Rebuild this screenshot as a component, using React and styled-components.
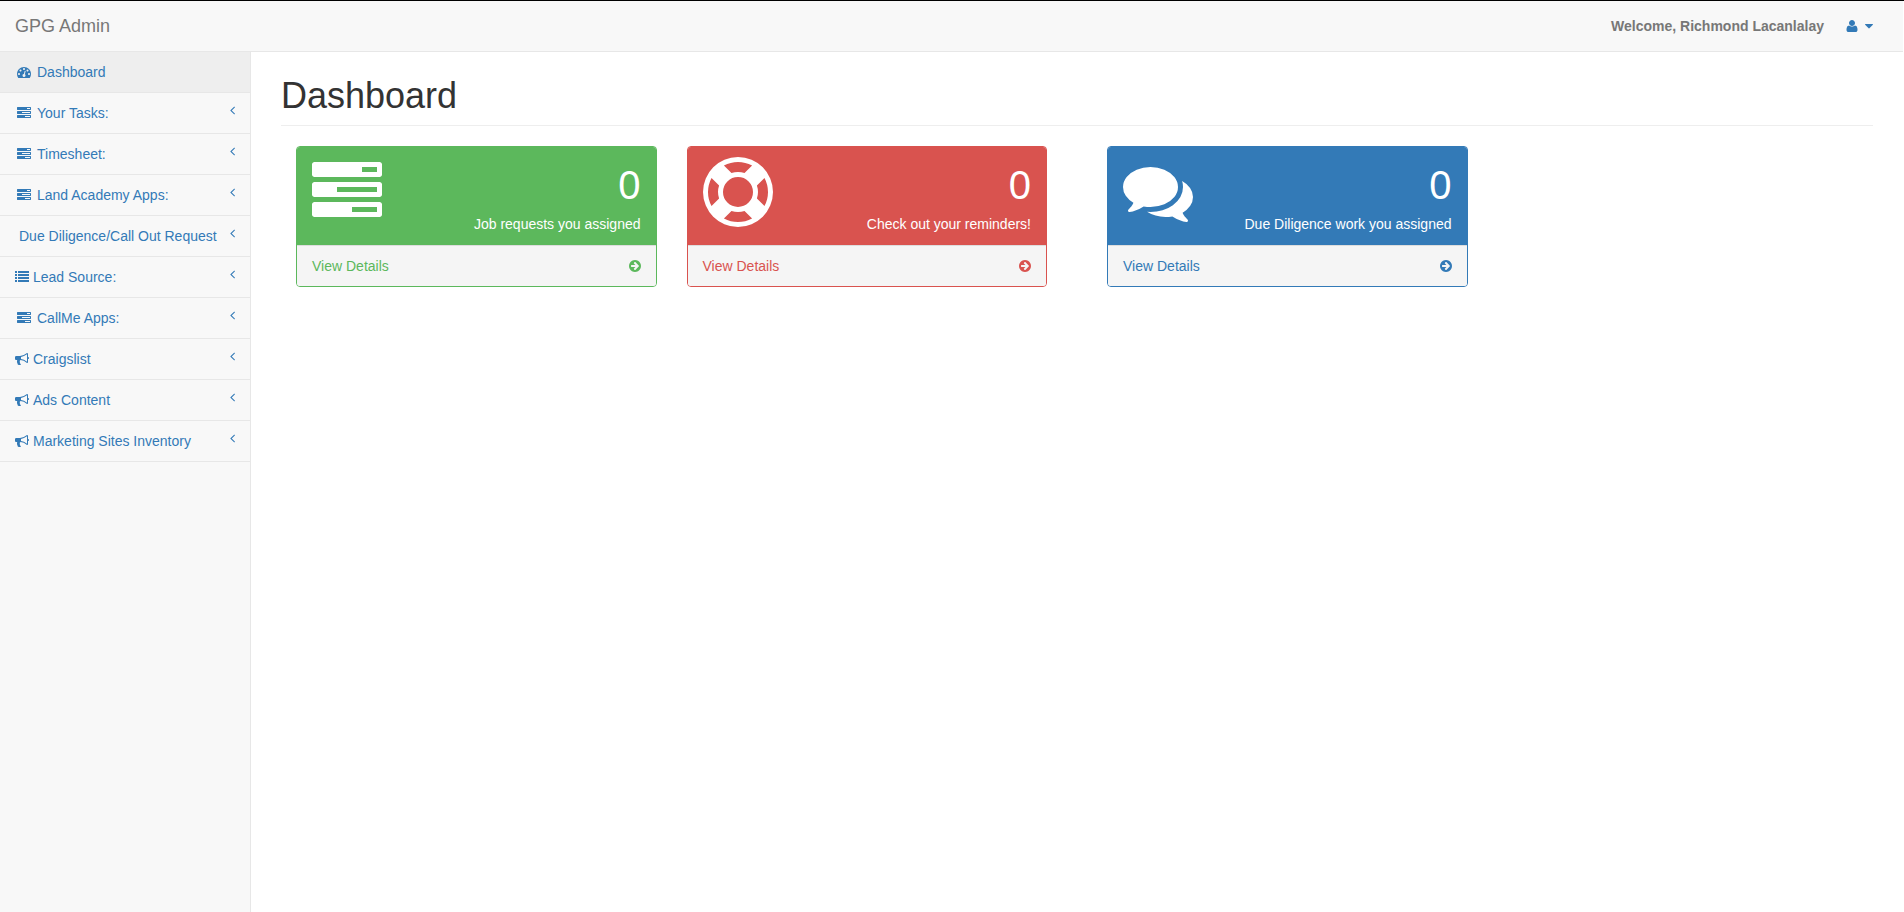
import React from "react"
import styled, { createGlobalStyle, ThemeProvider } from "styled-components"

const theme = {
  colors: {
    link: "#337ab7",
    text: "#333",
    muted: "#777",
    border: "#e7e7e7",
    panel: "#f8f8f8",
    active: "#eee",
    footer: "#f5f5f5",
    green: "#5cb85c",
    red: "#d9534f",
    blue: "#337ab7",
  },
}

const GlobalStyle = createGlobalStyle`
  * {
    box-sizing: border-box;
  }

  body {
    margin: 0;
    background: #fff;
    color: ${props => props.theme.colors.text};
    font-family: "Liberation Sans", Arial, sans-serif;
    font-size: 14px;
    line-height: 20px;
  }
`

const Page = styled.div`
  min-height: 100vh;
  display: flex;
  flex-direction: column;
  padding-right: 1px;
  border-top: 1px solid #000;
`

const Navbar = styled.header`
  display: flex;
  align-items: center;
  justify-content: space-between;
  padding: 15px 30px 15px 15px;
  background-color: ${props => props.theme.colors.panel};
  border-bottom: 1px solid ${props => props.theme.colors.border};
`

const Brand = styled.a`
  color: ${props => props.theme.colors.muted};
  font-size: 18px;
  text-decoration: none;
`

const UserArea = styled.div`
  display: flex;
  align-items: center;
  gap: 19px;
  color: ${props => props.theme.colors.muted};
`

const UserButton = styled.button`
  display: flex;
  align-items: center;
  gap: 4px;
  padding: 0;
  border: 0;
  background: none;
  color: ${props => props.theme.colors.link};
  cursor: pointer;
`

const Body = styled.div`
  flex: 1;
  display: flex;
`

const Sidebar = styled.nav`
  width: 251px;
  flex-shrink: 0;
  background-color: ${props => props.theme.colors.panel};
  border-right: 1px solid ${props => props.theme.colors.border};
`

const Menu = styled.ul`
  list-style: none;
  margin: 0;
  padding: 0;
`

const MenuItem = styled.li`
  border-bottom: 1px solid ${props => props.theme.colors.border};
`

const MenuLink = styled.a`
  display: flex;
  align-items: center;
  gap: 4px;
  padding: 10px 15px;
  color: ${props => props.theme.colors.link};
  background-color: ${props =>
    props.$active ? props.theme.colors.active : "transparent"};
  text-decoration: none;
  white-space: nowrap;

  &:hover {
    background-color: ${props => props.theme.colors.active};
  }
`

const IconSlot = styled.span`
  width: ${props => props.$width}px;
  display: flex;
  justify-content: center;
`

const Arrow = styled.span`
  display: flex;
  align-self: flex-start;
  margin-left: auto;
`

const Svg = styled.svg`
  display: block;
  flex-shrink: 0;
  fill: currentColor;
`

const Content = styled.main`
  flex: 1;
  min-width: 0;
  padding: 24px 30px;
`

const PageHeader = styled.h1`
  margin: 0 0 20px;
  padding-bottom: 9px;
  border-bottom: 1px solid #eee;
  font-size: 36px;
  font-weight: normal;
  line-height: 40px;
`

const Columns = styled.div`
  display: grid;
  grid-template-columns: 1fr 1fr;
  gap: 30px;

  @media screen and (max-width: 1199px) {
    grid-template-columns: 1fr;
  }
`

const CardGroup = styled.div`
  display: grid;
  grid-template-columns: 1fr 1fr;
  gap: 30px;
  padding: 0 15px;
  align-items: start;
`

const Card = styled.section`
  border: 1px solid ${props => props.theme.colors[props.$color]};
  border-radius: 4px;
  overflow: hidden;
`

const CardHeading = styled.div`
  display: flex;
  align-items: flex-start;
  justify-content: space-between;
  padding: 10px 15px 11px;
  color: #fff;
  background-color: ${props => props.theme.colors[props.$color]};
`

const CardStats = styled.div`
  text-align: right;
`

const Count = styled.div`
  font-size: 40px;
  line-height: 57px;
`

const CardFooter = styled.a`
  display: flex;
  align-items: center;
  justify-content: space-between;
  padding: 10px 15px;
  color: ${props => props.theme.colors[props.$color]};
  background-color: ${props => props.theme.colors.footer};
  border-top: 1px solid #ddd;
  text-decoration: none;
`

// x, width: horizontal slice of the 1792 unit em square
const icons = {
  dashboard: {
    d: "M384 1152q0-53-37.5-90.5t-90.5-37.5-90.5 37.5-37.5 90.5 37.5 90.5 90.5 37.5 90.5-37.5 37.5-90.5zm192-448q0-53-37.5-90.5t-90.5-37.5-90.5 37.5-37.5 90.5 37.5 90.5 90.5 37.5 90.5-37.5 37.5-90.5zm428 481l101-382q6-26-7.5-48.5t-38.5-29.5-48 6.5-30 39.5l-101 382q-60 5-107 43.5t-63 98.5q-20 77 20 146t117 89 146-20 89-117q16-60-6-117t-72-91zm660-33q0-53-37.5-90.5t-90.5-37.5-90.5 37.5-37.5 90.5 37.5 90.5 90.5 37.5 90.5-37.5 37.5-90.5zm-640-640q0-53-37.5-90.5t-90.5-37.5-90.5 37.5-37.5 90.5 37.5 90.5 90.5 37.5 90.5-37.5 37.5-90.5zm448 192q0-53-37.5-90.5t-90.5-37.5-90.5 37.5-37.5 90.5 37.5 90.5 90.5 37.5 90.5-37.5 37.5-90.5zm320 448q0 261-141 483-19 29-54 29h-1402q-35 0-54-29-141-221-141-483 0-182 71-348t191-286 286-191 348-71 348 71 286 191 191 286 71 348z",
  },
  tasks: {
    d: "M1024 1408h640v-128h-640v128zm-384-512h1024v-128h-1024v128zm640-512h384v-128h-384v128zm512 832v256q0 26-19 45t-45 19h-1664q-26 0-45-19t-19-45v-256q0-26 19-45t45-19h1664q26 0 45 19t19 45zm0-512v256q0 26-19 45t-45 19h-1664q-26 0-45-19t-19-45v-256q0-26 19-45t45-19h1664q26 0 45 19t19 45zm0-512v256q0 26-19 45t-45 19h-1664q-26 0-45-19t-19-45v-256q0-26 19-45t45-19h1664q26 0 45 19t19 45z",
  },
  list: {
    d: "M0 1280h256v256h-256zM0 896h256v256h-256zM0 512h256v256h-256zM0 128h256v256h-256zM384 1280h1408v256h-1408zM384 896h1408v256h-1408zM384 512h1408v256h-1408zM384 128h1408v256h-1408z",
  },
  bullhorn: {
    d: "M1664 640q53 0 90.5 37.5t37.5 90.5-37.5 90.5-90.5 37.5v384q0 52-38 90t-90 38q-417-347-812-380-58 19-91 66t-31 100.5 40 92.5q-20 33-23 65.5t6 58 33.5 55 48 50 61.5 50.5q-29 58-111.5 83t-168.5 11.5-132-55.5q-7-23-29.5-87.5t-32-94.5-23-89-15-101 3.5-98.5 22-110.5h-122q-66 0-113-47t-47-113v-192q0-66 47-113t113-47h480q435 0 896-384 52 0 90 38t38 90v384zm-128 604v-954q-394 302-768 343v270q377 42 768 341z",
  },
  lifeRing: {
    d: "M896 0q182 0 348 71t286 191 191 286 71 348-71 348-191 286-286 191-348 71-348-71-286-191-191-286-71-348 71-348 191-286 286-191 348-71zm0 128q-190 0-361 90l194 194q82-28 167-28t167 28l194-194q-171-90-361-90zm-678 1129l194-194q-28-82-28-167t28-167l-194-194q-90 171-90 361t90 361zm678 407q190 0 361-90l-194-194q-82 28-167 28t-167-28l-194 194q171 90 361 90zm0-384q159 0 271.5-112.5t112.5-271.5-112.5-271.5-271.5-112.5-271.5 112.5-112.5 271.5 112.5 271.5 271.5 112.5zm484-217l194 194q90-171 90-361t-90-361l-194 194q28 82 28 167t-28 167z",
  },
  comments: {
    d: "M1408 768q0 139-94 257t-256.5 186.5-353.5 68.5q-86 0-176-16-124 88-278 128-36 9-86 16h-3q-11 0-20.5-8t-11.5-21q-1-3-1-6.5t.5-6.5 2-6l2.5-5 3.5-5.5 4-5 4.5-5 4-4.5q5-6 23-25t26-29.5 22.5-29 25-38.5 20.5-44q-124-72-195-177t-71-224q0-139 94-257t256.5-186.5 353.5-68.5 353.5 68.5 256.5 186.5 94 257zm384 256q0 120-71 224.5t-195 176.5q10 24 20.5 44t25 38.5 22.5 29 26 29.5 23 25q1 1 4 4.5t4.5 5 4 5 3.5 5.5l2.5 5 2 6 .5 6.5-1 6.5q-3 14-13 22t-22 7q-50-7-86-16-154-40-278-128-90 16-176 16-271 0-472-132 58 4 88 4 161 0 309-45t264-129q125-92 192-212t67-254q0-77-23-152 129 71 204 178t75 230z",
  },
  arrowCircle: {
    x: 128,
    width: 1536,
    d: "M1413 896q0-27-18-45l-91-91-362-362q-18-18-45-18t-45 18l-91 91q-18 18-18 45t18 45l189 189h-502q-26 0-45 19t-19 45v128q0 26 19 45t45 19h502l-189 189q-18 18-18 45t18 45l91 91q18 18 45 18t45-18l362-362 91-91q18-18 18-45zm251 0q0 209-103 385.5t-279.5 279.5-385.5 103-385.5-103-279.5-279.5-103-385.5 103-385.5 279.5-279.5 385.5-103 385.5 103 279.5 279.5 103 385.5z",
  },
  angleLeft: {
    x: 576,
    width: 640,
    d: "M1203 544q0 13-10 23l-393 393 393 393q10 10 10 23t-10 23l-50 50q-10 10-23 10t-23-10l-466-466q-10-10-10-23t10-23l466-466q10-10 23-10t23 10l50 50q10 10 10 23z",
  },
  user: {
    d: "M1600 1405q0 120-73 189.5t-194 69.5h-874q-121 0-194-69.5t-73-189.5q0-53 3.5-103.5t14-109 26.5-108.5 43-97.5 62-81 85.5-53.5 111.5-20q9 0 42 21.5t74.5 48 108 48 133.5 21.5 133.5-21.5 108-48 74.5-48 42-21.5q61 0 111.5 20t85.5 53.5 62 81 43 97.5 26.5 108.5 14 109 3.5 103.5zm-320-893q0 159-112.5 271.5t-271.5 112.5-271.5-112.5-112.5-271.5 112.5-271.5 271.5-112.5 271.5 112.5 112.5 271.5z",
  },
  caretDown: {
    x: 384,
    width: 1024,
    d: "M1408 704q0 26-19 45l-448 448q-19 19-45 19t-45-19l-448-448q-19-19-19-45t19-45 45-19h896q26 0 45 19t19 45z",
  },
}

const Icon = ({ name, size = 14 }) => {
  const { d, x = 0, width = 1792 } = icons[name]
  return (
    <Svg
      width={(size * width) / 1792}
      height={size}
      viewBox={`${x} 0 ${width} 1792`}
      aria-hidden="true"
    >
      <path d={d} />
    </Svg>
  )
}

const menu = [
  { label: "Dashboard", icon: "dashboard", slot: 18, active: true },
  { label: "Your Tasks:", icon: "tasks", slot: 18, sub: true },
  { label: "Timesheet:", icon: "tasks", slot: 18, sub: true },
  { label: "Land Academy Apps:", icon: "tasks", slot: 18, sub: true },
  { label: "Due Diligence/Call Out Request", slot: 0, sub: true },
  { label: "Lead Source:", icon: "list", slot: 14, sub: true },
  { label: "CallMe Apps:", icon: "tasks", slot: 18, sub: true },
  { label: "Craigslist", icon: "bullhorn", slot: 14, sub: true },
  { label: "Ads Content", icon: "bullhorn", slot: 14, sub: true },
  { label: "Marketing Sites Inventory", icon: "bullhorn", slot: 14, sub: true },
]

const cardGroups = [
  [
    { color: "green", icon: "tasks", count: 0, label: "Job requests you assigned" },
    { color: "red", icon: "lifeRing", count: 0, label: "Check out your reminders!" },
  ],
  [
    { color: "blue", icon: "comments", count: 0, label: "Due Diligence work you assigned" },
  ],
]

const StatCard = ({ color, icon, count, label }) => {
  return (
    <Card $color={color}>
      <CardHeading $color={color}>
        <Icon name={icon} size={70} />
        <CardStats>
          <Count>{count}</Count>
          <div>{label}</div>
        </CardStats>
      </CardHeading>
      <CardFooter href="#" $color={color}>
        <span>View Details</span>
        <Icon name="arrowCircle" />
      </CardFooter>
    </Card>
  )
}

const App = () => {
  return (
    <ThemeProvider theme={theme}>
      <GlobalStyle />
      <Page>
        <Navbar>
          <Brand href="#">GPG Admin</Brand>
          <UserArea>
            <strong>Welcome, Richmond Lacanlalay</strong>
            <UserButton type="button" aria-label="User menu">
              <IconSlot $width={18}>
                <Icon name="user" />
              </IconSlot>
              <Icon name="caretDown" />
            </UserButton>
          </UserArea>
        </Navbar>
        <Body>
          <Sidebar>
            <Menu>
              {menu.map(item => (
                <MenuItem key={item.label}>
                  <MenuLink href="#" $active={item.active}>
                    <IconSlot $width={item.slot}>
                      {item.icon && <Icon name={item.icon} />}
                    </IconSlot>
                    <span>{item.label}</span>
                    {item.sub && (
                      <Arrow>
                        <Icon name="angleLeft" />
                      </Arrow>
                    )}
                  </MenuLink>
                </MenuItem>
              ))}
            </Menu>
          </Sidebar>
          <Content>
            <PageHeader>Dashboard</PageHeader>
            <Columns>
              {cardGroups.map((cards, i) => (
                <CardGroup key={i}>
                  {cards.map(card => (
                    <StatCard key={card.label} {...card} />
                  ))}
                </CardGroup>
              ))}
            </Columns>
          </Content>
        </Body>
      </Page>
    </ThemeProvider>
  )
}

export default App
